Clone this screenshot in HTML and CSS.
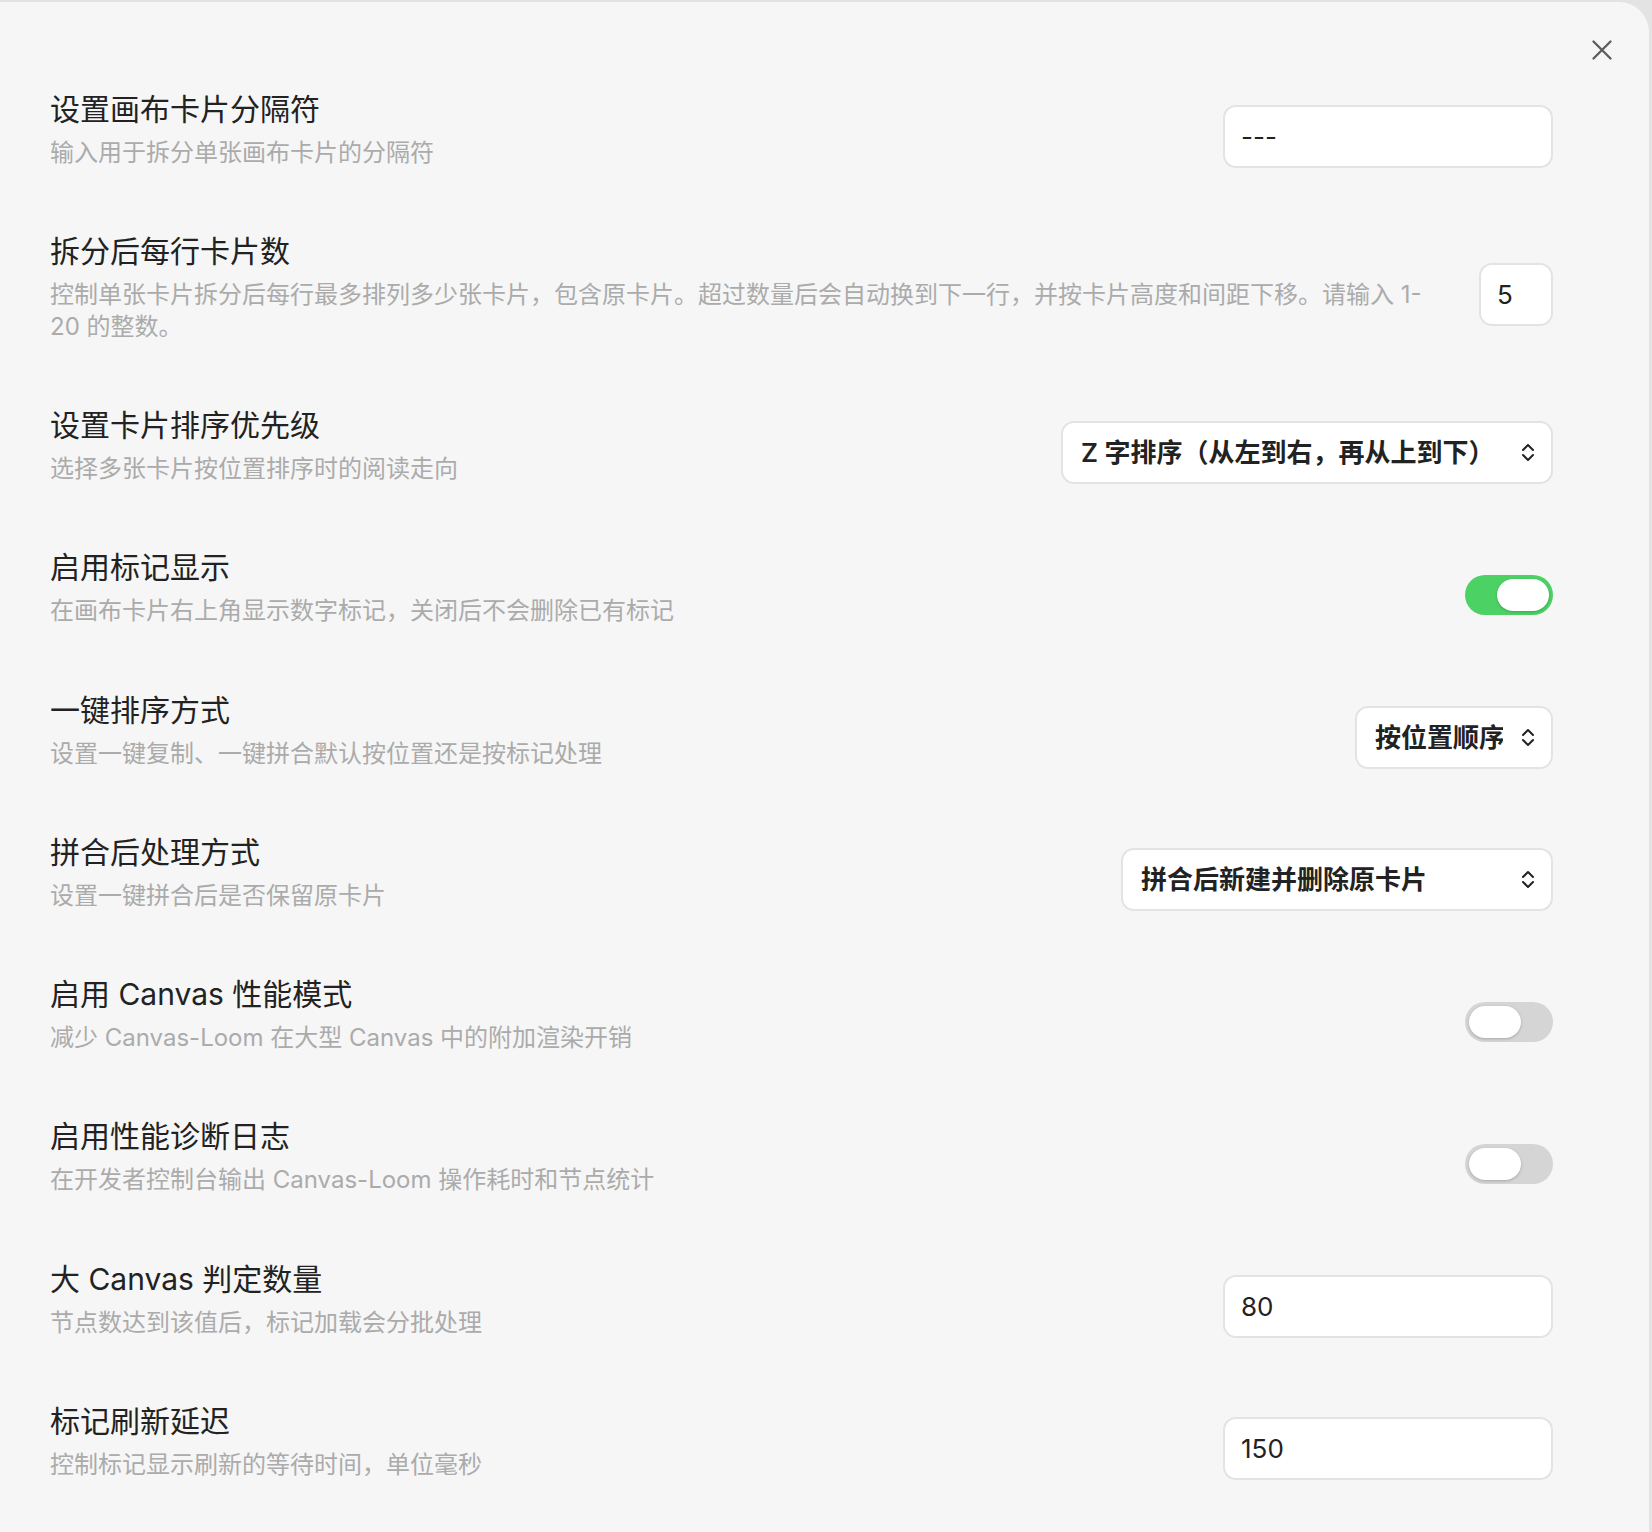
FILE: index.html
```html
<!DOCTYPE html>
<html lang="zh-CN">
<head>
    <meta charset="UTF-8">
    <meta name="viewport" content="width=device-width, initial-scale=1.0">
    <title>Canvas-Loom 设置</title>
    <link rel="stylesheet" href="styles.css">
</head>
<body>

    <div class="modal">
        <!-- Close button -->
        <button class="modal-close" aria-label="关闭">
            <svg width="20" height="20" viewBox="0 0 20 20">
                <path d="M1.5 1.5 L18.5 18.5 M18.5 1.5 L1.5 18.5" />
            </svg>
        </button>

        <div class="modal-content">

            <div class="setting-item">
                <div class="setting-info">
                    <div class="setting-name">设置画布卡片分隔符</div>
                    <div class="setting-desc">输入用于拆分单张画布卡片的分隔符</div>
                </div>
                <div class="setting-control">
                    <input type="text" class="text-input wide" value="---">
                </div>
            </div>

            <div class="setting-item">
                <div class="setting-info">
                    <div class="setting-name">拆分后每行卡片数</div>
                    <div class="setting-desc">控制单张卡片拆分后每行最多排列多少张卡片，包含原卡片。超过数量后会自动换到下一行，并按卡片高度和间距下移。请输入 1-20 的整数。</div>
                </div>
                <div class="setting-control">
                    <input type="text" class="text-input narrow" value="5">
                </div>
            </div>

            <div class="setting-item">
                <div class="setting-info">
                    <div class="setting-name">设置卡片排序优先级</div>
                    <div class="setting-desc">选择多张卡片按位置排序时的阅读走向</div>
                </div>
                <div class="setting-control">
                    <div class="dropdown">
                        <select class="dropdown-select sort-order">
                            <option>Z 字排序（从左到右，再从上到下）</option>
                            <option>N 字排序（从上到下，再从左到右）</option>
                        </select>
                        <svg class="dropdown-icon" width="14" height="21" viewBox="0 0 14 21">
                            <path d="M2 8 L7 3 L12 8 M2 13 L7 18 L12 13" />
                        </svg>
                    </div>
                </div>
            </div>

            <div class="setting-item">
                <div class="setting-info">
                    <div class="setting-name">启用标记显示</div>
                    <div class="setting-desc">在画布卡片右上角显示数字标记，关闭后不会删除已有标记</div>
                </div>
                <div class="setting-control">
                    <div class="toggle is-enabled"><div class="toggle-knob"></div></div>
                </div>
            </div>

            <div class="setting-item">
                <div class="setting-info">
                    <div class="setting-name">一键排序方式</div>
                    <div class="setting-desc">设置一键复制、一键拼合默认按位置还是按标记处理</div>
                </div>
                <div class="setting-control">
                    <div class="dropdown">
                        <select class="dropdown-select merge-order">
                            <option>按位置顺序</option>
                            <option>按标记顺序</option>
                        </select>
                        <svg class="dropdown-icon" width="14" height="21" viewBox="0 0 14 21">
                            <path d="M2 8 L7 3 L12 8 M2 13 L7 18 L12 13" />
                        </svg>
                    </div>
                </div>
            </div>

            <div class="setting-item">
                <div class="setting-info">
                    <div class="setting-name">拼合后处理方式</div>
                    <div class="setting-desc">设置一键拼合后是否保留原卡片</div>
                </div>
                <div class="setting-control">
                    <div class="dropdown">
                        <select class="dropdown-select merge-action">
                            <option>拼合后新建并删除原卡片</option>
                            <option>拼合后新建并保留原卡片</option>
                        </select>
                        <svg class="dropdown-icon" width="14" height="21" viewBox="0 0 14 21">
                            <path d="M2 8 L7 3 L12 8 M2 13 L7 18 L12 13" />
                        </svg>
                    </div>
                </div>
            </div>

            <div class="setting-item">
                <div class="setting-info">
                    <div class="setting-name">启用 Canvas 性能模式</div>
                    <div class="setting-desc">减少 Canvas-Loom 在大型 Canvas 中的附加渲染开销</div>
                </div>
                <div class="setting-control">
                    <div class="toggle"><div class="toggle-knob"></div></div>
                </div>
            </div>

            <div class="setting-item">
                <div class="setting-info">
                    <div class="setting-name">启用性能诊断日志</div>
                    <div class="setting-desc">在开发者控制台输出 Canvas-Loom 操作耗时和节点统计</div>
                </div>
                <div class="setting-control">
                    <div class="toggle"><div class="toggle-knob"></div></div>
                </div>
            </div>

            <div class="setting-item">
                <div class="setting-info">
                    <div class="setting-name">大 Canvas 判定数量</div>
                    <div class="setting-desc">节点数达到该值后，标记加载会分批处理</div>
                </div>
                <div class="setting-control">
                    <input type="text" class="text-input wide" value="80">
                </div>
            </div>

            <div class="setting-item">
                <div class="setting-info">
                    <div class="setting-name">标记刷新延迟</div>
                    <div class="setting-desc">控制标记显示刷新的等待时间，单位毫秒</div>
                </div>
                <div class="setting-control">
                    <input type="text" class="text-input wide" value="150">
                </div>
            </div>

        </div>
    </div>

    <script>
        // Toggle switches
        document.querySelectorAll('.toggle').forEach(function(toggle) {
            toggle.addEventListener('click', function() {
                toggle.classList.toggle('is-enabled');
            });
        });
    </script>

</body>
</html>
```

FILE: styles.css
```css
body {
    font-family: Inter, "Noto Sans CJK SC", sans-serif;
    margin: 0;
    padding: 2px 3px 0 0;
    background-color: #e3e3e3;
    color: #222222;
}

.modal {
    position: relative;
    min-height: calc(100vh - 2px);
    background-color: #f6f6f6;
    border-radius: 0 30px 0 0;
    box-sizing: border-box;
}

.modal-close {
    position: absolute;
    top: 26px;
    right: 25px;
    width: 44px;
    height: 44px;
    padding: 0;
    border: none;
    background: none;
    display: flex;
    align-items: center;
    justify-content: center;
    cursor: pointer;
}

.modal-close svg path {
    stroke: #5c5c5c;
    stroke-width: 2.3;
    stroke-linecap: round;
    fill: none;
}

.modal-content {
    padding: 63.5px 96px 0 50px;
}

/* Setting rows */
.setting-item {
    display: flex;
    align-items: center;
    padding: 23.3px 0 23.4px;
}

.setting-info {
    flex: 1 1 auto;
    margin-right: 40px;
    padding-bottom: 16px;
}

.setting-name {
    font-size: 30px;
    line-height: 40px;
    color: #222222;
}

.setting-desc {
    margin-top: 8px;
    font-size: 24px;
    line-height: 31.6px;
    color: #ababab;
}

.setting-control {
    flex-shrink: 0;
    display: flex;
    justify-content: flex-end;
}

/* Text inputs */
.text-input {
    height: 63px;
    padding: 0 16px;
    border: 2px solid #e3e3e3;
    border-radius: 13px;
    background-color: #ffffff;
    font-family: Inter, "Noto Sans CJK SC", sans-serif;
    font-size: 26px;
    color: #222222;
    box-sizing: border-box;
    outline: none;
}

.text-input.wide {
    width: 330px;
}

.text-input.narrow {
    width: 74px;
}

/* Dropdowns */
.dropdown {
    position: relative;
}

.dropdown-select {
    appearance: none;
    -webkit-appearance: none;
    height: 63px;
    padding: 0 48px 0 18px;
    border: 2px solid #e3e3e3;
    border-radius: 13px;
    background-color: #ffffff;
    font-family: Inter, "Noto Sans CJK SC", sans-serif;
    font-size: 26px;
    font-weight: 600;
    color: #222222;
    box-sizing: border-box;
    outline: none;
}

.dropdown-select.sort-order {
    width: 492px;
}

.dropdown-select.merge-order {
    width: 198px;
}

.dropdown-select.merge-action {
    width: 432px;
}

.dropdown-icon {
    position: absolute;
    right: 18px;
    top: 21px;
    pointer-events: none;
}

.dropdown-icon path {
    stroke: #222222;
    stroke-width: 2;
    stroke-linecap: round;
    stroke-linejoin: round;
    fill: none;
}

/* Toggle switches */
.toggle {
    position: relative;
    width: 88px;
    height: 40px;
    border-radius: 20px;
    background-color: #d5d5d5;
    cursor: pointer;
}

.toggle-knob {
    position: absolute;
    top: 4px;
    left: 4px;
    width: 52px;
    height: 32px;
    border-radius: 16px;
    background-color: #ffffff;
    box-shadow: 0 1px 3px rgba(0, 0, 0, 0.22);
}

.toggle.is-enabled {
    background-color: #4cd264;
}

.toggle.is-enabled .toggle-knob {
    left: 32px;
}
```
